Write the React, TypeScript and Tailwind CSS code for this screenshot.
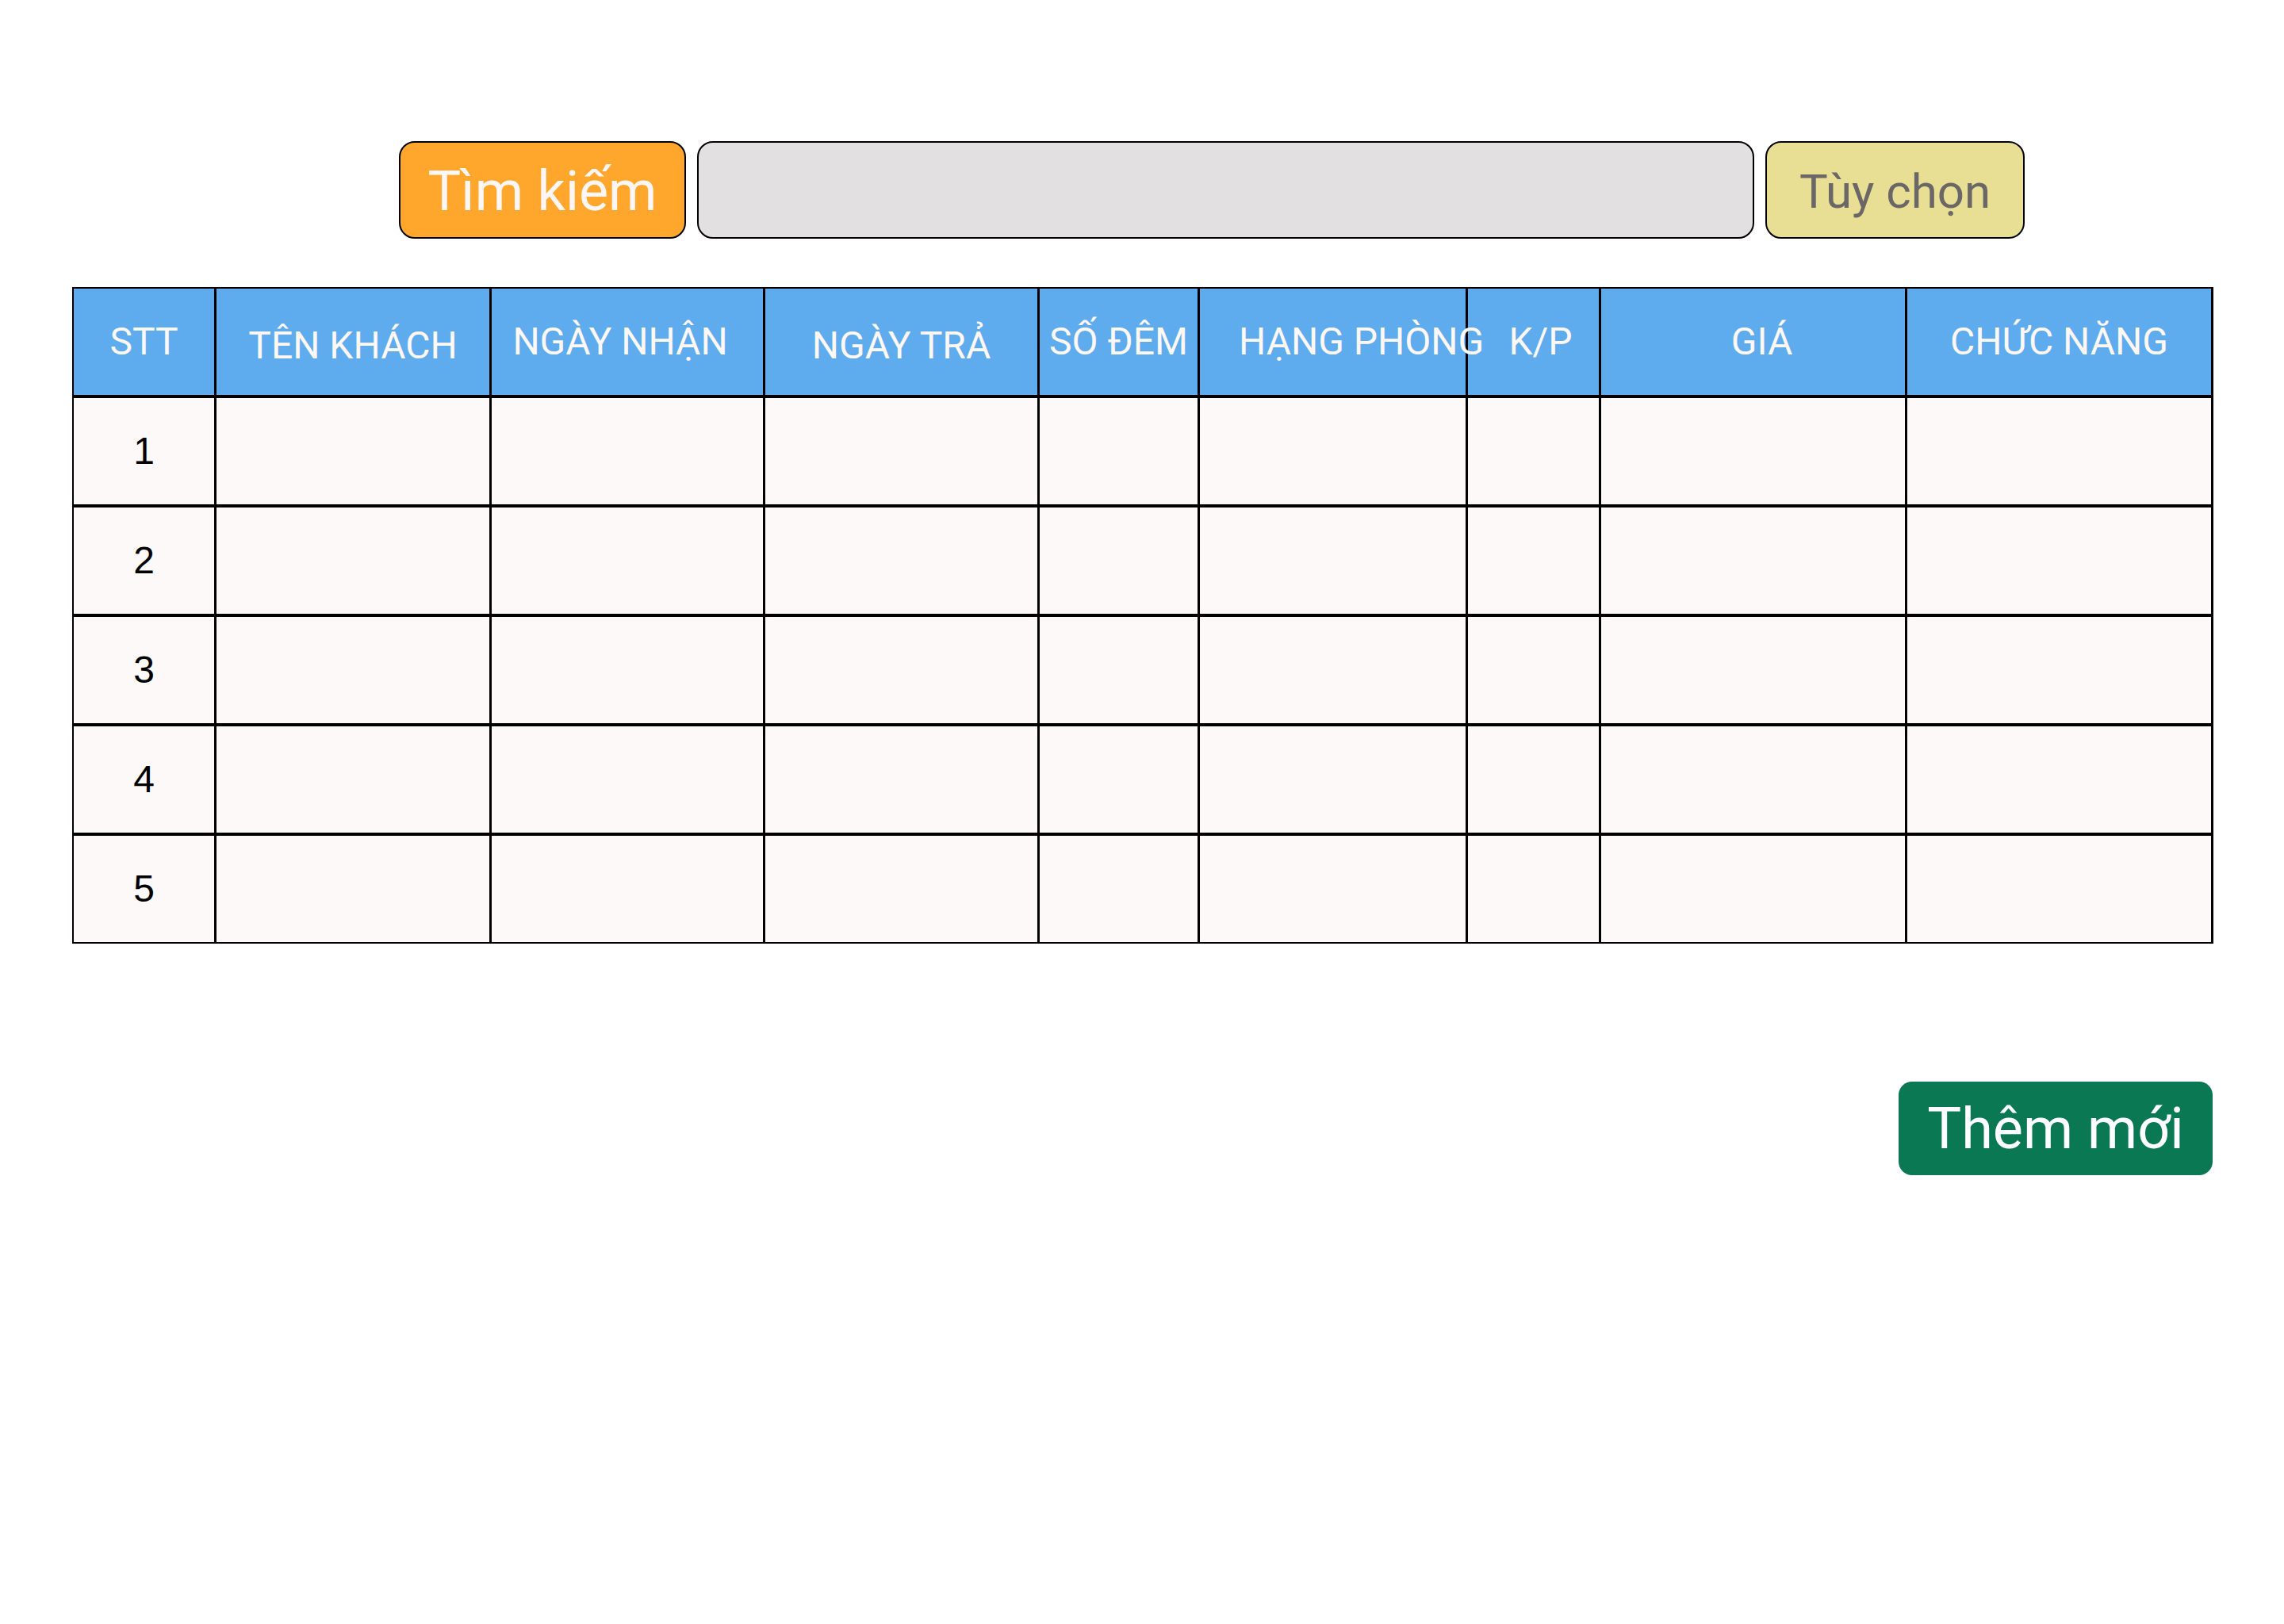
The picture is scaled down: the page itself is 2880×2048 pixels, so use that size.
import React from "react";

const columns = [
  { label: "STT", w: "w-[177px]", cls: "justify-center" },
  { label: "TÊN KHÁCH", w: "w-[344px]", cls: "justify-center pt-[10px]" },
  { label: "NGÀY NHẬN", w: "w-[342px]", cls: "justify-center pr-[18px]" },
  { label: "NGÀY TRẢ", w: "w-[343px]", cls: "justify-center pt-[10px]" },
  { label: "SỐ ĐÊM", w: "w-[199px]", cls: "justify-center" },
  { label: "HẠNG PHÒNG", w: "w-[335px]", cls: "justify-start pl-[49px] relative z-10" },
  { label: "K/P", w: "w-[165px]", cls: "justify-center pl-[18px]" },
  { label: "GIÁ", w: "w-[383px]", cls: "justify-center pl-[22px]" },
  { label: "CHỨC NĂNG", w: "w-[383px]", cls: "justify-center" },
];

const rows = [1, 2, 3, 4, 5];

export default function App() {
  return (
    <div className="w-[2880px] h-[2048px] bg-white flex flex-col font-['Roboto',sans-serif]">
      <div className="flex items-stretch gap-[14px] pt-[178px] pl-[503px]">
        <button className="w-[362px] h-[123px] rounded-[20px] border-2 border-black bg-[#ffa72c] text-[#fdf6f4] text-[70px] leading-none flex items-center justify-center pt-[2px]">
          Tìm kiếm
        </button>
        <div className="w-[1333px] h-[123px] rounded-[20px] border-2 border-black bg-[#e3e0e1]" />
        <button className="w-[327px] h-[123px] rounded-[20px] border-2 border-black bg-[#e8df94] text-[#6a6766] text-[60px] leading-none flex items-center justify-center pt-[4px]">
          Tùy chọn
        </button>
      </div>

      <div className="mt-[61px] ml-[91px] w-[2700px] bg-black p-[2px] flex flex-col gap-y-[4px]">
        <div className="flex gap-x-[3px]">
          {columns.map((c) => (
            <div
              key={c.label}
              className={`${c.w} h-[134px] bg-[#5eacee] text-[#fdf7f5] text-[48px] leading-none flex items-center whitespace-nowrap ${c.cls}`}
            >
              {c.label}
            </div>
          ))}
        </div>
        {rows.map((n) => (
          <div key={n} className="flex gap-x-[3px]">
            {columns.map((c, i) => (
              <div
                key={c.label}
                className={`${c.w} h-[134px] bg-[#fcf9f8] text-black text-[48px] leading-none flex items-center justify-center font-['Liberation_Sans',sans-serif]`}
              >
                {i === 0 ? n : null}
              </div>
            ))}
          </div>
        ))}
      </div>

      <div className="flex justify-end pr-[90px] mt-[174px]">
        <button className="w-[396px] h-[118px] rounded-[17px] bg-[#0a7852] text-white text-[72px] leading-none flex items-center justify-center pt-[2px]">
          Thêm mới
        </button>
      </div>
    </div>
  );
}
